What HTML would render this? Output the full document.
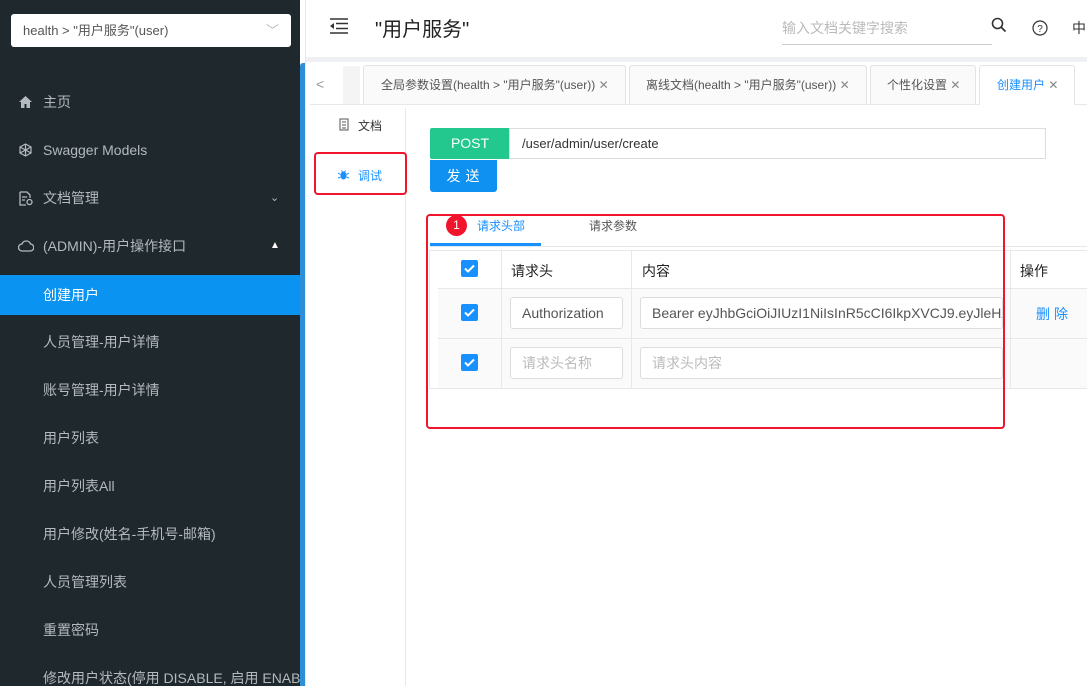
<!DOCTYPE html>
<html><head><meta charset="utf-8"><style>
*{box-sizing:border-box;margin:0;padding:0}
body{width:1087px;height:686px;overflow:hidden;position:relative;background:#fff;font-family:"Liberation Sans","Noto Sans CJK SC",sans-serif;font-size:13px;color:#333}
.abs{position:absolute}
#side{left:0;top:0;width:300px;height:686px;background:#1f282d}
.sel{left:11px;top:14px;width:280px;height:33px;background:#fff;border-radius:3px;color:#555;font-size:13px;line-height:33px;padding-left:12px}
.mi{position:absolute;left:0;width:300px;height:40px;line-height:40px;color:#b4babe;font-size:14px}
.mi .t{position:absolute;left:43px}
.sub .t{left:43px}
#scroll{left:300px;top:63px;width:5px;height:623px;background:#2e8fd6;border-radius:3px 0 0 0}
</style></head><body>
<div id="side" class="abs">
<div class="sel abs">health &gt; "用户服务"(user)<span style="position:absolute;right:12px;top:0;color:#bbb">﹀</span></div>
<div class="mi" style="top:82px"><svg style="position:absolute;left:19px;top:14px" width="13" height="12" viewBox="0 0 13 12"><path d="M6.5 0L0 6h2v6h3.5V8h2v4H11V6h2z" fill="#b4babe"/></svg><span class="t">主页</span></div>
<div class="mi" style="top:130px"><svg style="position:absolute;left:19px;top:13px" width="13" height="14" viewBox="0 0 13 14"><path d="M6.5 1L12 4v6l-5.5 3L1 10V4z M6.5 1v12 M1 4l11 6 M12 4L1 10" fill="none" stroke="#b4babe" stroke-width="1.2"/></svg><span class="t">Swagger Models</span></div>
<div class="mi" style="top:178px"><svg style="position:absolute;left:19px;top:13px" width="14" height="15" viewBox="0 0 14 15"><path d="M1 1h7l3 3v3M1 1v13h6 M3 6h5M3 9h3" fill="none" stroke="#b4babe" stroke-width="1.3"/><circle cx="10.5" cy="11" r="2.5" fill="none" stroke="#b4babe" stroke-width="1.3"/></svg><span class="t">文档管理</span><span style="position:absolute;left:270px;font-size:11px">⌄</span></div>
<div class="mi" style="top:226px"><svg style="position:absolute;left:18px;top:14px" width="16" height="12" viewBox="0 0 16 12"><path d="M4 11h8a3.5 3.5 0 0 0 .5-7A4.5 4.5 0 0 0 4 4a3.5 3.5 0 0 0 0 7z" fill="none" stroke="#b4babe" stroke-width="1.3"/></svg><span class="t">(ADMIN)-用户操作接口</span><span style="position:absolute;left:270px;font-size:10px;color:#fff">▲</span></div>
<div class="mi sub" style="top:275px;background:#0a93f0;color:#fff"><span class="t">创建用户</span></div>
<div class="mi sub" style="top:322px"><span class="t">人员管理-用户详情</span></div>
<div class="mi sub" style="top:370px"><span class="t">账号管理-用户详情</span></div>
<div class="mi sub" style="top:418px"><span class="t">用户列表</span></div>
<div class="mi sub" style="top:466px"><span class="t">用户列表All</span></div>
<div class="mi sub" style="top:514px"><span class="t">用户修改(姓名-手机号-邮箱)</span></div>
<div class="mi sub" style="top:562px"><span class="t">人员管理列表</span></div>
<div class="mi sub" style="top:610px"><span class="t">重置密码</span></div>
<div class="mi sub" style="top:658px;overflow:hidden"><span class="t" style="white-space:nowrap">修改用户状态(停用 DISABLE, 启用 ENABLE)</span></div>
</div>
<div id="scroll" class="abs"></div>
<div class="abs" style="left:305px;top:0;width:1px;height:686px;background:#e8e8e8"></div>
<svg class="abs" style="left:330px;top:18px" width="18" height="16" viewBox="0 0 18 16"><path d="M0 1h18M6 5.5h12M6 10.5h12M0 15h18" stroke="#333" stroke-width="1.6"/><path d="M4 5v6L0 8z" fill="#333"/></svg>
<div class="abs" style="left:375px;top:13px;font-size:20px;color:#222">"用户服务"</div>
<div class="abs" style="left:782px;top:18px;font-size:14px;color:#bbb">输入文档关键字搜索</div>
<div class="abs" style="left:782px;top:44px;width:210px;height:1px;background:#ccc"></div>
<svg class="abs" style="left:991px;top:17px" width="16" height="16" viewBox="0 0 16 16"><circle cx="6.5" cy="6.5" r="5" fill="none" stroke="#333" stroke-width="1.6"/><path d="M10 10l4.5 4.5" stroke="#333" stroke-width="1.8"/></svg>
<svg class="abs" style="left:1032px;top:20px" width="16" height="16" viewBox="0 0 16 16"><circle cx="8" cy="8" r="7" fill="none" stroke="#333" stroke-width="1.2"/><text x="8" y="12" font-size="10" text-anchor="middle" fill="#333" font-family="Liberation Sans">?</text></svg>
<div class="abs" style="left:1072px;top:18px;font-size:14px;color:#333">中</div>
<div class="abs" style="left:306px;top:57px;width:781px;height:5px;background:#eef0f3"></div>
<div class="abs" style="left:310px;top:104px;width:777px;height:1px;background:#e8e8e8"></div>
<div class="abs" style="left:316px;top:76px;color:#999;font-size:14px">&lt;</div>
<div class="abs" style="left:343px;top:66px;width:17px;height:38px;background:#f4f4f4"></div>
<div class="abs" style="left:363px;top:65px;width:263px;height:39px;border:1px solid #e3e3e3;border-bottom:none;background:#fafafa;border-radius:3px 3px 0 0;line-height:38px;padding-left:17px;font-size:12px;color:#555">全局参数设置(health &gt; "用户服务"(user)) <span style="color:#888">✕</span></div>
<div class="abs" style="left:629px;top:65px;width:238px;height:39px;border:1px solid #e3e3e3;border-bottom:none;background:#fafafa;border-radius:3px 3px 0 0;line-height:38px;padding-left:16px;font-size:12px;color:#555">离线文档(health &gt; "用户服务"(user)) <span style="color:#888">✕</span></div>
<div class="abs" style="left:870px;top:65px;width:106px;height:39px;border:1px solid #e3e3e3;border-bottom:none;background:#fafafa;border-radius:3px 3px 0 0;line-height:38px;padding-left:16px;font-size:12px;color:#555">个性化设置 <span style="color:#888">✕</span></div>
<div class="abs" style="left:979px;top:65px;width:96px;height:40px;border:1px solid #e3e3e3;border-bottom:none;background:#fff;border-radius:3px 3px 0 0;line-height:38px;padding-left:17px;font-size:12px;color:#1890ff">创建用户 <span style="color:#888">✕</span></div>
<div class="abs" style="left:405px;top:108px;width:1px;height:578px;background:#e8e8e8"></div>
<svg class="abs" style="left:339px;top:118px" width="10" height="13" viewBox="0 0 10 13"><path d="M1 1h8v11H1zM3 4h4M3 7h4M3 10h4" fill="none" stroke="#555" stroke-width="1"/></svg>
<div class="abs" style="left:358px;top:117px;font-size:12px;color:#333">文档</div>
<div class="abs" style="left:314px;top:152px;width:93px;height:43px;border:2px solid #f0142d;border-radius:4px"></div>
<svg class="abs" style="left:338px;top:169px" width="11" height="11" viewBox="0 0 11 11"><ellipse cx="5.5" cy="6.5" rx="3" ry="4" fill="#1890ff"/><path d="M0 4l2.5 1.5M11 4L8.5 5.5M0 9l2.5-1M11 9l-2.5-1M3.5 1.5l1 1.5M7.5 1.5l-1 1.5" stroke="#1890ff" stroke-width="1"/></svg>
<div class="abs" style="left:358px;top:167px;font-size:12px;color:#1890ff">调试</div>
<div class="abs" style="left:430px;top:128px;width:80px;height:31px;background:#22c88e;color:#fff;font-size:14px;line-height:31px;text-align:center;border-radius:2px 0 0 2px">POST</div>
<div class="abs" style="left:509px;top:128px;width:537px;height:31px;border:1px solid #ddd;line-height:29px;padding-left:12px;font-size:13px;color:#333">/user/admin/user/create</div>
<div class="abs" style="left:430px;top:160px;width:67px;height:32px;background:#0f91f2;color:#fff;font-size:14px;line-height:32px;text-align:center;border-radius:0 0 3px 3px;letter-spacing:5px;padding-left:4px">发送</div>
<div class="abs" style="left:430px;top:246px;width:657px;height:1px;background:#e8e8e8"></div>
<div class="abs" style="left:430px;top:243px;width:111px;height:3px;background:#1890ff"></div>
<div class="abs" style="left:446px;top:215px;width:21px;height:21px;border-radius:50%;background:#f0142d;color:#fff;font-size:12px;line-height:21px;text-align:center">1</div>
<div class="abs" style="left:477px;top:217px;font-size:12px;color:#1890ff">请求头部</div>
<div class="abs" style="left:589px;top:217px;font-size:12px;color:#555">请求参数</div>
<div class="abs" style="left:429px;top:250px;width:658px;height:139px;border:1px solid #e8e8e8;border-right:none"></div>
<div class="abs" style="left:438px;top:288px;width:649px;height:100px;background:#fafafa"></div>
<div class="abs" style="left:438px;top:288px;width:649px;height:1px;background:#e8e8e8"></div>
<div class="abs" style="left:438px;top:338px;width:649px;height:1px;background:#e8e8e8"></div>
<div class="abs" style="left:501px;top:251px;width:1px;height:137px;background:#e8e8e8"></div>
<div class="abs" style="left:631px;top:251px;width:1px;height:137px;background:#e8e8e8"></div>
<div class="abs" style="left:1010px;top:251px;width:1px;height:137px;background:#e8e8e8"></div>
<div class="abs" style="left:511px;top:261px;font-size:14px;color:#222">请求头</div>
<div class="abs" style="left:642px;top:261px;font-size:14px;color:#222">内容</div>
<div class="abs" style="left:1020px;top:261px;font-size:14px;color:#222">操作</div>
<svg class="abs" style="left:461px;top:260px" width="17" height="17"><rect width="17" height="17" rx="2" fill="#1890ff"/><path d="M4 8.5l3 3 6-6" stroke="#fff" stroke-width="2" fill="none"/></svg>
<svg class="abs" style="left:461px;top:304px" width="17" height="17"><rect width="17" height="17" rx="2" fill="#1890ff"/><path d="M4 8.5l3 3 6-6" stroke="#fff" stroke-width="2" fill="none"/></svg>
<svg class="abs" style="left:461px;top:354px" width="17" height="17"><rect width="17" height="17" rx="2" fill="#1890ff"/><path d="M4 8.5l3 3 6-6" stroke="#fff" stroke-width="2" fill="none"/></svg>
<div class="abs" style="left:510px;top:297px;width:113px;height:32px;border:1px solid #ddd;border-radius:3px;background:#fff;line-height:30px;padding-left:11px;font-size:14px;color:#555">Authorization</div>
<div class="abs" style="left:640px;top:297px;width:363px;height:32px;border:1px solid #ddd;border-radius:3px;background:#fff;line-height:30px;padding-left:11px;font-size:14px;color:#555;overflow:hidden;white-space:nowrap">Bearer eyJhbGciOiJIUzI1NiIsInR5cCI6IkpXVCJ9.eyJleHAiOjE</div>
<div class="abs" style="left:510px;top:347px;width:113px;height:32px;border:1px solid #ddd;border-radius:3px;background:#fff;line-height:30px;padding-left:11px;font-size:14px;color:#bbb">请求头名称</div>
<div class="abs" style="left:640px;top:347px;width:363px;height:32px;border:1px solid #ddd;border-radius:3px;background:#fff;line-height:30px;padding-left:11px;font-size:14px;color:#bbb">请求头内容</div>
<div class="abs" style="left:1036px;top:304px;font-size:14px;color:#1890ff;letter-spacing:4px">删除</div>
<div class="abs" style="left:426px;top:214px;width:579px;height:215px;border:2px solid #f0142d;border-radius:4px"></div>
</body></html>
